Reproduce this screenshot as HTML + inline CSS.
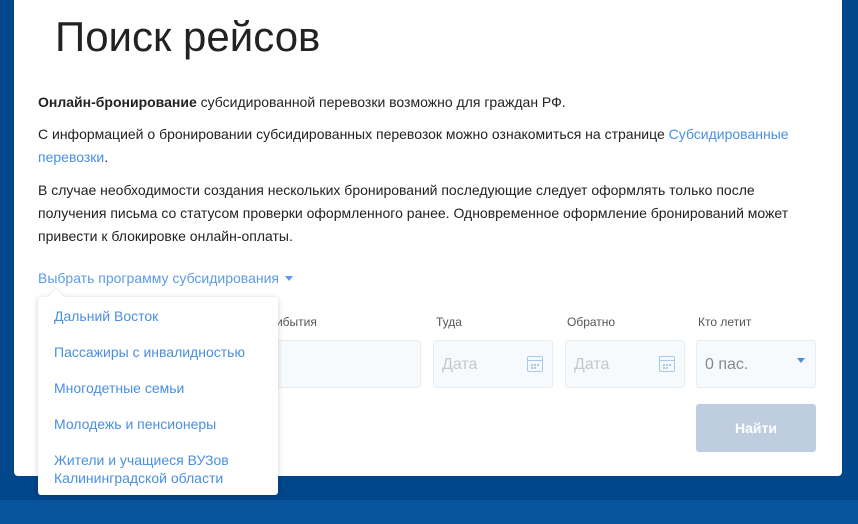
<!DOCTYPE html>
<html><head><meta charset="utf-8"><style>
*{box-sizing:border-box;margin:0;padding:0}
body{width:858px;height:524px;overflow:hidden;background:#01468b;font-family:"Liberation Sans",sans-serif;position:relative}
.strip{position:absolute;left:0;top:500px;width:858px;height:24px;background:#07549a}
.card{position:absolute;left:14px;top:0;width:828px;height:476px;background:#fff;border-radius:0 0 4px 4px}
h1{position:absolute;left:55px;top:13px;font-size:42px;font-weight:normal;color:#222}
.p{position:absolute;left:38px;font-size:14px;line-height:23px;color:#222;width:780px}
a{color:#4a8fe0;text-decoration:none}
.sel{position:absolute;left:38px;top:270px;font-size:14px;color:#5d9be4}
.tri{display:inline-block;width:0;height:0;border-left:4px solid transparent;border-right:4px solid transparent;border-top:5px solid #5d9be4;margin-left:6px;vertical-align:2px}
.lbl{position:absolute;top:315px;font-size:12px;color:#555}
.box{position:absolute;top:340px;height:48px;background:#f7fafd;border:1px solid #e8edf2;border-radius:3px;font-size:16px;color:#c4c8cc;padding:15px 8px}
.cal{position:absolute;right:9px;top:15px;width:16px;height:16px;border:1.5px solid #a9c8ef;border-radius:2px}
.cal:before{content:"";position:absolute;left:0;right:0;top:3px;border-top:1.5px solid #a9c8ef}
.cal:after{content:"";position:absolute;left:3px;top:7px;width:2px;height:2px;background:#a9c8ef;box-shadow:3px 0 #a9c8ef,6px 0 #a9c8ef,0 3px #a9c8ef,3px 3px #a9c8ef}
.btn{position:absolute;left:696px;top:404px;width:120px;height:48px;background:#bfcde0;border-radius:3px;color:#fff;font-weight:bold;font-size:14px;text-align:center;line-height:48px}
.dd{position:absolute;left:38px;top:297px;width:240px;height:198px;background:#fff;border-radius:3px;box-shadow:0 1px 6px rgba(0,0,0,.2)}
.dd:before{content:"";position:absolute;left:12px;top:-6px;width:12px;height:12px;background:#fff;transform:rotate(45deg);box-shadow:-1px -1px 2px rgba(0,0,0,.08)}
.it{position:absolute;left:16px;font-size:14px;line-height:18px;color:#4a8fe0}
</style></head><body>
<div class="strip"></div>
<div class="card"></div>
<h1>Поиск рейсов</h1>
<div class="p" style="top:91px"><b>Онлайн-бронирование</b> субсидированной перевозки возможно для граждан РФ.</div>
<div class="p" style="top:123px">С информацией о бронировании субсидированных перевозок можно ознакомиться на странице <a>Субсидированные перевозки</a>.</div>
<div class="p" style="top:179px;width:770px">В случае необходимости создания нескольких бронирований последующие следует оформлять только после получения письма со статусом проверки оформленного ранее. Одновременное оформление бронирований может привести к блокировке онлайн-оплаты.</div>
<div class="sel">Выбрать программу субсидирования<span class="tri"></span></div>
<div class="lbl" style="left:227px">Город прибытия</div>
<div class="box" style="left:170px;width:251px"></div>
<div class="lbl" style="left:436px">Туда</div>
<div class="box" style="left:433px;width:120px">Дата<span class="cal"></span></div>
<div class="lbl" style="left:567px">Обратно</div>
<div class="box" style="left:565px;width:120px">Дата<span class="cal"></span></div>
<div class="lbl" style="left:698px">Кто летит</div>
<div class="box" style="left:696px;width:120px;color:#888">0 пас.<span style="position:absolute;right:10px;top:17px;border-left:4px solid transparent;border-right:4px solid transparent;border-top:5px solid #4a8fe0"></span></div>
<div class="btn">Найти</div>
<div class="dd">
<div class="it" style="top:10px">Дальний Восток</div>
<div class="it" style="top:46px">Пассажиры с инвалидностью</div>
<div class="it" style="top:82px">Многодетные семьи</div>
<div class="it" style="top:118px">Молодежь и пенсионеры</div>
<div class="it" style="top:154px">Жители и учащиеся ВУЗов<br>Калининградской области</div>
</div>
</body></html>
